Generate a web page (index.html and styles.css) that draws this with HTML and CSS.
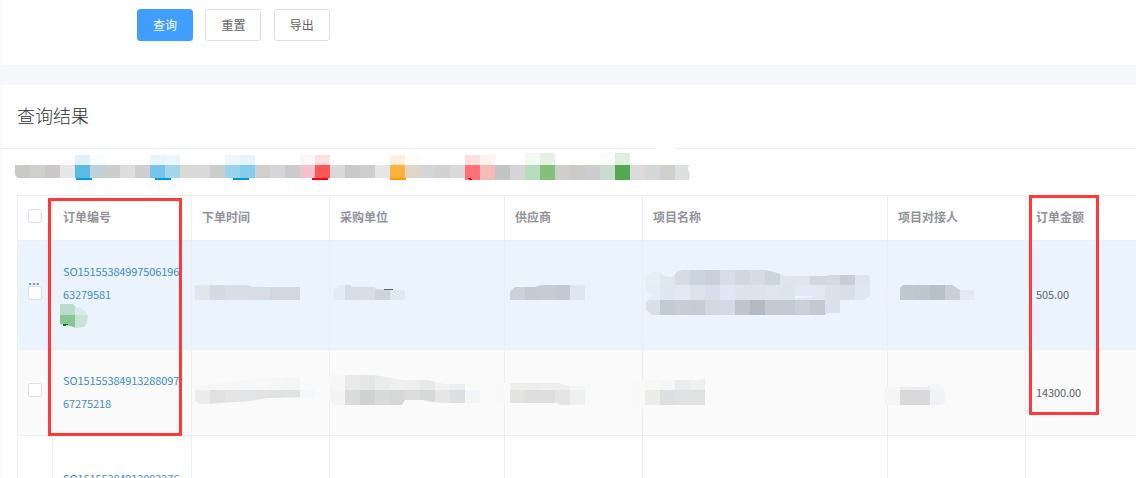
FILE: index.html
```html
<!DOCTYPE html>
<html lang="zh-CN">
<head>
    <meta charset="UTF-8">
    <meta name="viewport" content="width=device-width, initial-scale=1.0">
    <title>查询结果</title>
    <link rel="stylesheet" href="styles.css">
</head>
<body>
    <div class="search-card">
        <div class="button-row">
            <button class="btn btn-primary">查询</button>
            <button class="btn">重置</button>
            <button class="btn">导出</button>
        </div>
    </div>

    <div class="result-card">
        <div class="card-header">
            <h2>查询结果</h2>
        </div>

        <div class="summary">
            <svg class="mosaic" id="summary-mosaic" width="1135" height="46" viewBox="1 149 1135 46"></svg>
        </div>

        <div class="table-wrap">
            <table class="order-table">
                <colgroup>
                    <col class="col-check">
                    <col class="col-order">
                    <col class="col-time">
                    <col class="col-buyer">
                    <col class="col-supplier">
                    <col class="col-project">
                    <col class="col-contact">
                    <col class="col-amount">
                </colgroup>
                <thead>
                    <tr>
                        <th><span class="checkbox"></span></th>
                        <th>订单编号</th>
                        <th>下单时间</th>
                        <th>采购单位</th>
                        <th>供应商</th>
                        <th>项目名称</th>
                        <th>项目对接人</th>
                        <th>订单金额</th>
                    </tr>
                </thead>
                <tbody>
                    <tr class="row-active">
                        <td><span class="dots">...</span><span class="checkbox"></span></td>
                        <td>
                            <a class="order-no">SO15155384997506196<br>63279581</a>
                            <svg class="mosaic tag" id="tag-mosaic" width="28" height="24" viewBox="60 304 28 24"></svg>
                        </td>
                        <td class="masked"><svg class="mosaic" id="time-1" width="137" height="108" viewBox="192 241 137 108"></svg></td>
                        <td class="masked"><svg class="mosaic" id="buyer-1" width="174" height="108" viewBox="330 241 174 108"></svg></td>
                        <td class="masked"><svg class="mosaic" id="supplier-1" width="137" height="108" viewBox="505 241 137 108"></svg></td>
                        <td class="masked"><svg class="mosaic" id="project-1" width="244" height="108" viewBox="643 241 244 108"></svg></td>
                        <td class="masked"><svg class="mosaic" id="contact-1" width="137" height="108" viewBox="888 241 137 108"></svg></td>
                        <td class="amount">505.00</td>
                    </tr>
                    <tr class="row-striped">
                        <td><span class="checkbox"></span></td>
                        <td><a class="order-no">SO15155384913288097<br>67275218</a></td>
                        <td class="masked"><svg class="mosaic" id="time-2" width="137" height="85" viewBox="192 350 137 85"></svg></td>
                        <td class="masked"><svg class="mosaic" id="buyer-2" width="174" height="85" viewBox="330 350 174 85"></svg></td>
                        <td class="masked"><svg class="mosaic" id="supplier-2" width="137" height="85" viewBox="505 350 137 85"></svg></td>
                        <td class="masked"><svg class="mosaic" id="project-2" width="244" height="85" viewBox="643 350 244 85"></svg></td>
                        <td class="masked"><svg class="mosaic" id="contact-2" width="137" height="85" viewBox="888 350 137 85"></svg></td>
                        <td class="amount">14300.00</td>
                    </tr>
                    <tr class="row-last">
                        <td></td>
                        <td><a class="order-no">SO15155384913082276</a><br>&nbsp;</td>
                        <td></td>
                        <td></td>
                        <td></td>
                        <td></td>
                        <td></td>
                        <td></td>
                    </tr>
                </tbody>
            </table>
        </div>
    </div>

    <div class="mark mark-order"></div>
    <div class="mark mark-amount"></div>

    <script src="mosaic.js"></script>
</body>
</html>
```
FILE: styles.css
```css
* {
    box-sizing: border-box;
}

body {
    position: relative;
    margin: 0;
    padding-left: 1px;
    height: 478px;
    overflow: hidden;
    background-color: #f5f7fa;
    font-family: "Noto Sans CJK SC", sans-serif;
    font-size: 12px;
    color: #606266;
}

.search-card {
    height: 65px;
    padding: 9px 0 0 136px;
    background-color: #fff;
}

.button-row {
    display: flex;
    gap: 12.4px;
}

.btn {
    width: 56px;
    height: 32px;
    padding: 0 0 2px;
    border: 1px solid #dcdfe6;
    border-radius: 3px;
    background-color: #fff;
    color: #606266;
    font-family: inherit;
    font-size: 12px;
    cursor: pointer;
}

.btn-primary {
    border-color: #409eff;
    background-color: #409eff;
    color: #fff;
}

.result-card {
    margin-top: 20px;
    height: 393px;
    overflow: hidden;
    background-color: #fff;
}

.card-header {
    display: flex;
    align-items: center;
    height: 64px;
    padding: 0 16px 4px;
    border-bottom: 1px solid #ebeef5;
}

.card-header h2 {
    margin: 0;
    font-size: 18px;
    font-weight: 300;
    color: #303133;
}

.summary {
    height: 46px;
}

.mosaic {
    display: block;
    overflow: visible;
    shape-rendering: crispEdges;
}

.table-wrap {
    margin-left: 16px;
    overflow: hidden;
}

.order-table {
    width: 1169px;
    table-layout: fixed;
    border-collapse: separate;
    border-spacing: 0;
    border-top: 1px solid #ebeef5;
    border-left: 1px solid #ebeef5;
}

.col-check { width: 35px; }
.col-order { width: 139px; }
.col-time { width: 138px; }
.col-buyer { width: 175px; }
.col-supplier { width: 138px; }
.col-project { width: 245px; }
.col-contact { width: 138px; }
.col-amount { width: 160px; }

.order-table th,
.order-table td {
    padding: 0 0 0 10px;
    border-right: 1px solid #ebeef5;
    border-bottom: 1px solid #ebeef5;
    text-align: left;
    vertical-align: middle;
    white-space: nowrap;
}

.order-table th {
    height: 45px;
    padding-bottom: 3px;
    font-size: 12px;
    font-weight: 700;
    color: #909399;
}

.order-table td {
    font-size: 11px;
    line-height: 23px;
}

.order-table td.masked {
    padding: 0;
}

.row-active {
    height: 109px;
    background-color: #ebf3ff;
}

.row-striped {
    height: 86px;
    background-color: #fafafa;
}

.row-last {
    height: 109px;
}

.order-no {
    display: block;
    margin: -1px 0 1px;
    color: #428bca;
    letter-spacing: -0.12px;
}

.row-last .order-no {
    display: inline;
}

.amount {
    letter-spacing: -0.1px;
}

.row-active td.amount {
    padding-bottom: 2px;
}

.tag {
    margin: -3px 0 2px -3px;
}

.checkbox {
    display: block;
    width: 14px;
    height: 14px;
    margin-bottom: 5px;
    border: 1px solid #dcdfe6;
    border-radius: 2px;
    background-color: #fff;
}

.order-table th .checkbox {
    margin-bottom: 1px;
}

.dots {
    display: block;
    height: 12px;
    line-height: 10px;
    font-size: 14px;
    color: #4a7fb5;
}

.row-active .checkbox {
    margin-bottom: 16px;
}

.mark {
    position: absolute;
    border: 3px solid #ff3838;
}

.mark-order {
    left: 48px;
    top: 198px;
    width: 134px;
    height: 238px;
}

.mark-amount {
    left: 1029px;
    top: 195px;
    width: 70px;
    height: 220px;
}
```
FILE: mosaic.js
```javascript
const SVG_NS = 'http://www.w3.org/2000/svg';

function add(parent, name, attrs) {
    const el = document.createElementNS(SVG_NS, name);
    for (const key in attrs) {
        el.setAttribute(key, attrs[key]);
    }
    parent.appendChild(el);
    return el;
}

// rows: [x, y, height, 'color color ...'], every block is 15px wide, '-' skips one
// extras: [x, y, width, height, color]
function drawMosaic(id, outline, rows, extras) {
    const svg = document.getElementById(id);
    const group = add(svg, 'g', {});
    if (outline) {
        const clip = add(svg, 'clipPath', { id: id + '-clip' });
        add(clip, 'polygon', { points: outline });
        group.setAttribute('clip-path', 'url(#' + id + '-clip)');
    }
    rows.forEach(([x, y, height, colors]) => {
        colors.split(' ').forEach((color, i) => {
            if (color !== '-') {
                add(group, 'rect', { x: x + i * 15, y: y, width: 15, height: height, fill: '#' + color });
            }
        });
    });
    (extras || []).forEach(([x, y, width, height, fill]) => {
        add(svg, 'rect', { x, y, width, height, fill });
    });
}

drawMosaic('summary-mosaic', '15,148 700,148 700,165 689,165 688,168 690,175 689,180 20,180 15,175', [
    [75, 155, 10, 'dff0f8 f8fdfe - - - e6f4fb edf7fb - - - edf6fc e5f4fb - - - fff7f7 ffdfe0 - - - - fff0dd fffdf8 - - - ffe0e2 fff3f2'],
    [525, 153, 12, 'f3faf4 e5f1e4 - - - f9fcf9 deefe0'],
    [15, 165, 13, 'c9c9c7 cfd0ca c9c7c8 e7e7e9 58bce3 bfd2d9 cdcdcf dcdedd cfcdd1 73c5eb a5d6e7 dad9da dad9da cbcdca 9ad3ee 84cbec d0cfcd d6d6d8 c9cac9 f2c1cb ff5558 dad8d9 c9c9c9 cfcecc e4e6e8 ffb13b e1d5c6 d3d5d8 d4d1d2 d9d9db'],
    [465, 165, 15, 'ff7177 f5bbb7 c2c3c5 d5d5d5 b8ddbc 83c07b d0cecd cbcac7 cdccce c9dccf 52a94f dddbd9 d3d7d7 cfd0cb dedfe1']
], [
    [76, 178, 16, 2, '#0099d9'],
    [155, 178, 16, 2, '#0099d9'],
    [233, 178, 16, 2, '#0099d9'],
    [312, 178, 16, 2, '#ff0000'],
    [390, 178, 16, 2, '#ff9c00'],
    [468, 178, 3, 1, '#ff0000'],
    [469, 179, 3, 1, '#ff0000'],
    [656, 148, 19, 1, '#fff']
]);

drawMosaic('tag-mosaic', '60,304 73,304 76,307 81,308 86,312 88,316 87,323 84,327 76,328 70,326 60,324', [
    [60, 304, 11, 'b9dbc9 d8ebe8'],
    [60, 315, 13, '8ac493 c7e3d5']
], [
    [63, 324, 5, 1, '#00850d'],
    [63, 325, 3, 1, '#00850d']
]);

// first row
drawMosaic('time-1', '195,286 198,285 248,285 253,287 300,287 300,300 195,300', [
    [195, 285, 15, 'dfe6ec d3dae1 d7dee6 d7dee6 d7dde3 d2d8e2 d2d8e2']
]);

drawMosaic('buyer-1', '333,296 334,290 339,285 350,285 352,287 374,287 376,289 390,290 405,290 405,300 335,300', [
    [330, 285, 15, 'e3ebf6 d7dde7 d8dee8 cdd5da dfe9f3']
], [
    [384, 289, 9, 1, '#56666e']
]);

drawMosaic('supplier-1', '510,292 515,287 536,287 541,285 585,285 585,300 510,300', [
    [510, 285, 15, 'cbd2d9 c3cad3 c5ccd5 c2c9d3 dfe6f1']
]);

drawMosaic('project-1', '645,282 647,275 652,272 659,272 664,276 672,277 677,272 683,270 764,270 774,272 786,276 825,276 832,275 868,275 870,278 870,295 865,300 840,300 840,313 828,313 825,315 652,315 646,310 646,302 653,295 646,290', [
    [645, 270, 15, 'e6eef7 dfe8f1 d5dce5 ccd4df c9d0dc d6dde8 d0d7e0 d5dce5 ccd4de dee5ef dfe5ec d1d8e1 d4dae2 c8ced9 dee4f0'],
    [645, 285, 15, 'e4eef8 dce7f1 e2e9f4 dce2eb d7ddea dfe5f2 dce3eb dce3eb dfe5ef dce4ee e2e9f4 e2e9f4 dae1eb d8dfe7 e0e7f4'],
    [645, 300, 15, 'd9e0e8 c2cad4 c8ced7 c6cdd5 d1d8e0 d3dae5 bfc5cf b4b9c2 c3cad4 c4cad5 c9d0d8 c2c9d1 dbe1ec']
], [
    [795, 296, 17, 1, '#ebf3ff'],
    [795, 297, 10, 1, '#ebf3ff']
]);

drawMosaic('contact-1', '885,288 900,288 903,285 952,285 960,290 974,290 975,300 900,300 900,306 885,306', [
    [885, 285, 21, 'ebf2fd'],
    [900, 285, 15, 'c0c8cf bdc5cd b8c0c9 c9d0da e2e9f4']
]);

// second row
drawMosaic('time-2', '195,388 201,385 225,382 265,378 300,377 300,390 315,390 315,397 268,398 250,401 220,403 207,404 199,404 195,400', [
    [195, 375, 15, 'f6f6f6 f6f6f6 f6f6f6 f6f6f6 f7f7f7 f6f6f6 f5f5f5'],
    [195, 390, 15, 'ececec e1e1e1 e5e5e5 e3e4e6 e3e3e3 e0e2e1 e1e3e2 f5f8fb']
]);

drawMosaic('buyer-2', '329,376 330,375 375,375 385,377 405,380 428,380 435,382 445,384 465,384 465,390 480,390 480,403 440,403 433,402 423,400 405,400 402,405 335,405 329,400', [
    [315, 375, 15, 'f9f9f9 f6f6f6 e9e9e9 e5e6e6 ebecec eeefef eeeeee e8eaea f2f2f2 eeeeee'],
    [315, 390, 15, 'f9f9f9 f4f4f4 dbdbdb d0d1d2 dadada d6d8d7 dcdcdc d6d7d9 e6e6e6 dedfe1 f4f5f8']
]);

drawMosaic('supplier-2', '495,383 560,383 563,385 570,386 585,386 585,405 561,405 557,403 495,403', [
    [495, 383, 20, 'f9f9f9'],
    [510, 375, 15, 'eeeeee eeeeee efefef eeeeee f4f5f7'],
    [510, 390, 15, 'e4e3e2 dedede dddee0 e5e5e2 eef0f2']
]);

drawMosaic('project-2', '630,381 645,380 701,380 705,378 705,405 645,405 645,410 630,410', [
    [630, 381, 30, 'f9f9f9'],
    [645, 375, 15, 'f7f7f5 f3f5f6 ebebeb f0f0f0'],
    [645, 390, 15, 'eeecea dddfe1 dfe1e3 dfe2e0']
]);

drawMosaic('contact-2', '885,387 927,387 931,384 935,383 940,384 944,388 945,402 942,405 885,405', [
    [885, 375, 15, 'f6f6f6 ededed ececec f3f5f7'],
    [885, 390, 15, 'f5f5f5 d9d9d9 d8d9da f0f2f5']
]);
```
